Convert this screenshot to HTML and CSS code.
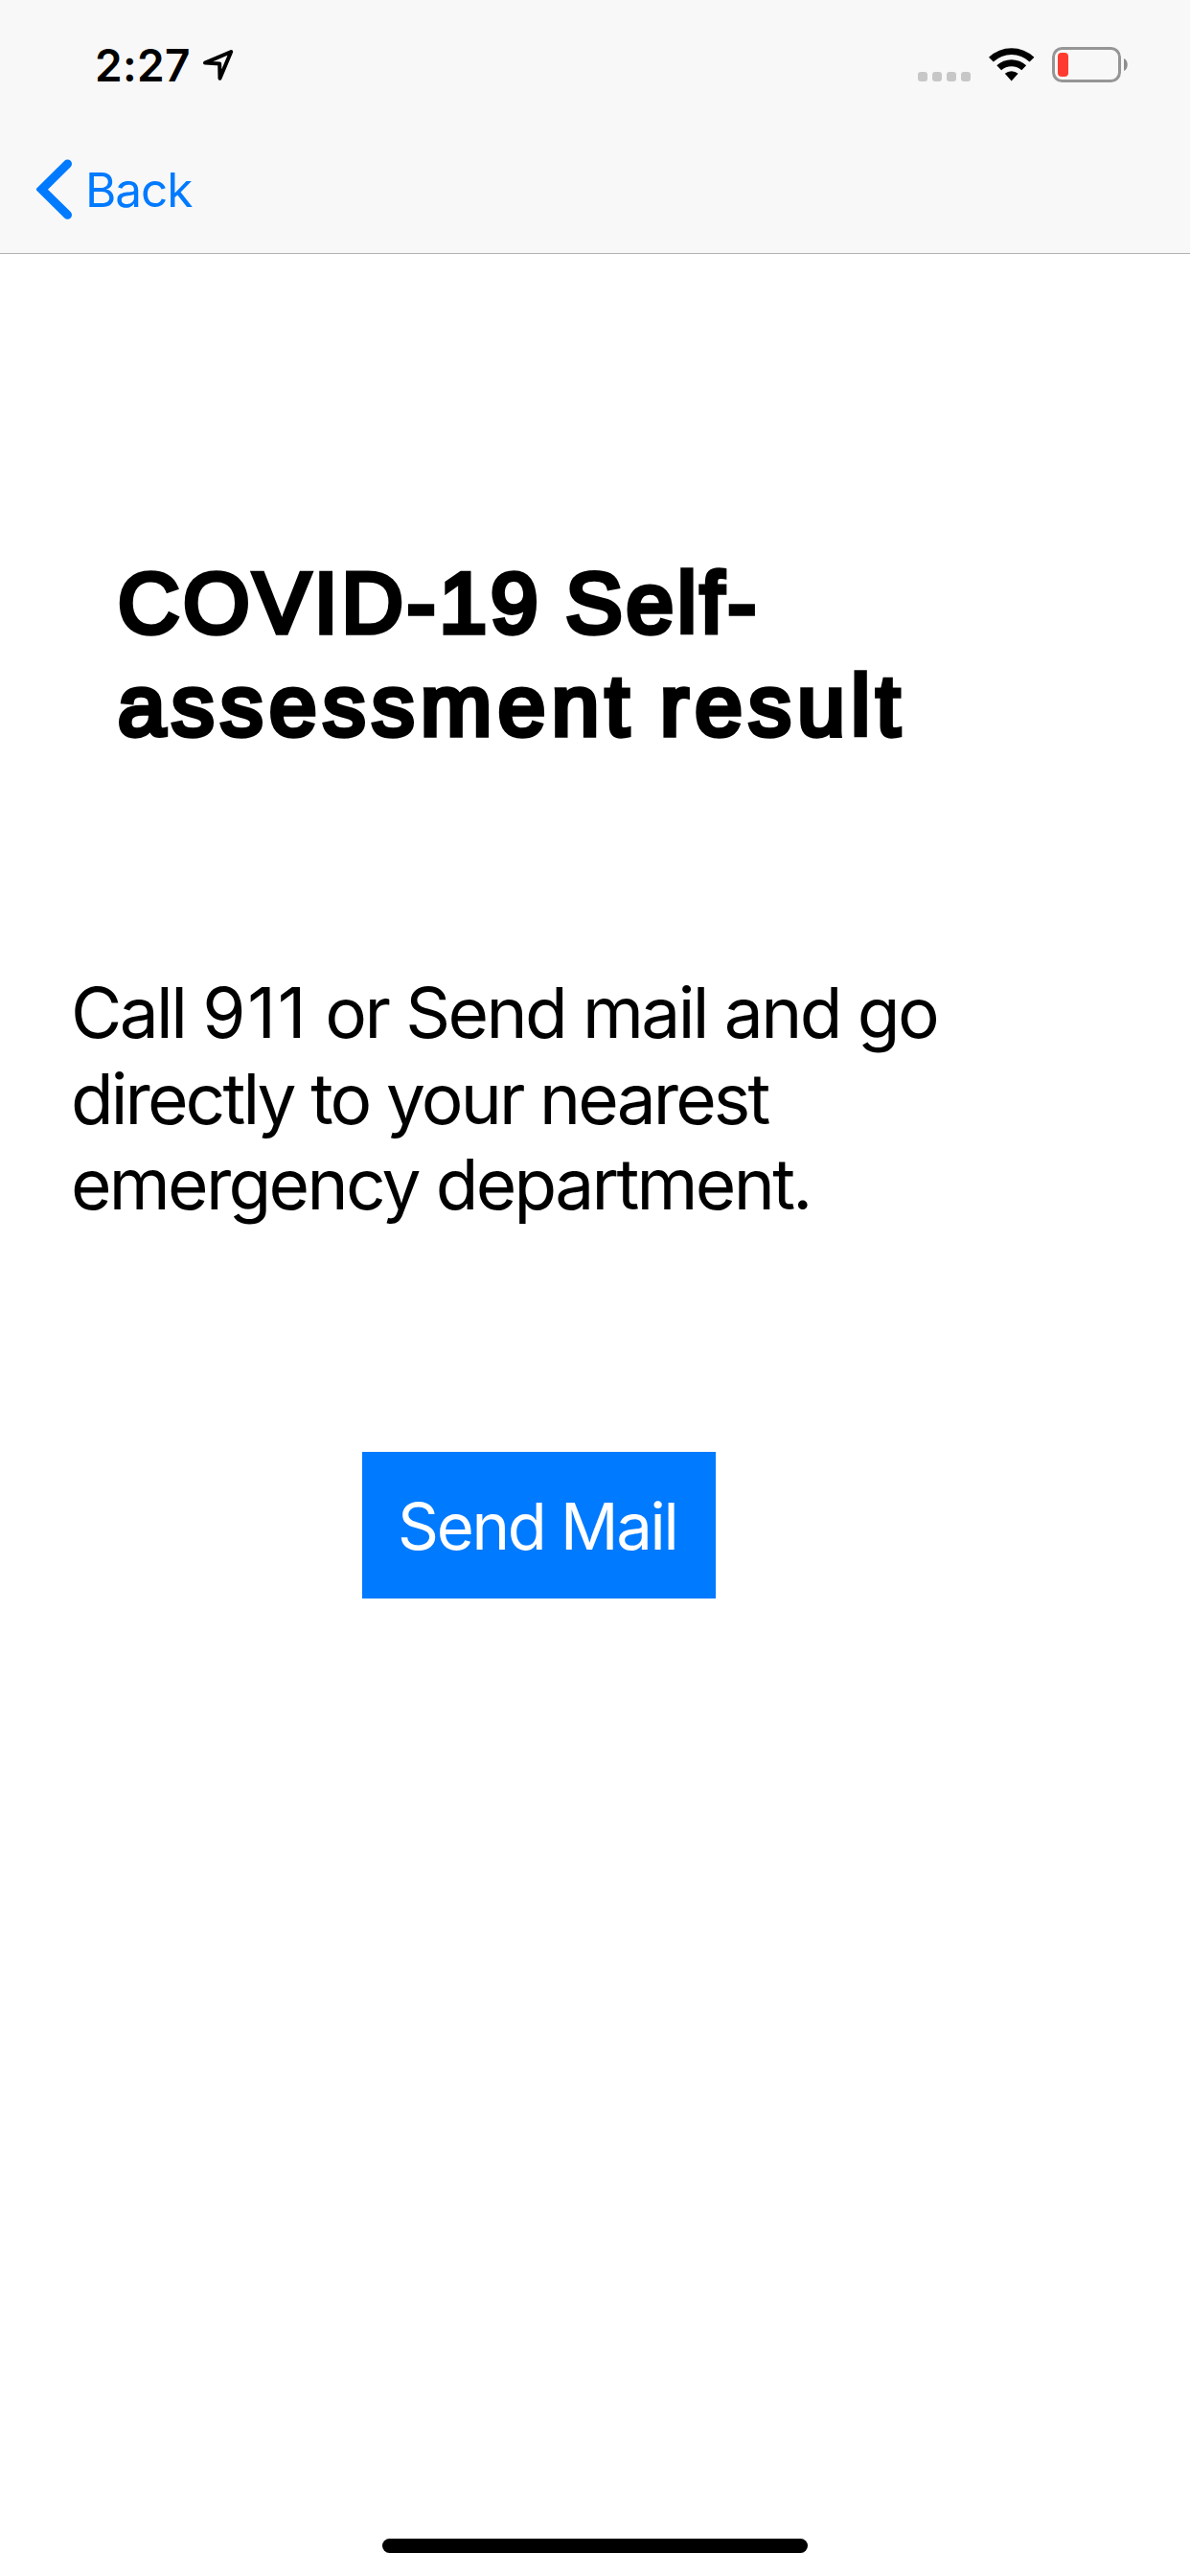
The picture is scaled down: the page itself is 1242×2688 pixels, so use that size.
FILE: index.html
```
<!DOCTYPE html>
<html lang="en">
<head>
<meta charset="utf-8">
<title>COVID-19 Self-assessment result</title>
<link rel="stylesheet" href="styles.css">
</head>
<body>
<div class="screen">
  <header class="header">
    <div class="status-bar">
      <span class="time">2:27</span>
      <svg class="location" viewBox="0 0 36 36" aria-hidden="true">
        <path d="M4 15.6 L31.2 4 L19.5 31.8 L19.2 16.5 Z"/>
      </svg>
      <div class="indicators">
        <div class="signal"><i></i><i></i><i></i><i></i></div>
        <svg class="wifi" viewBox="0 0 48 37" aria-hidden="true">
          <path d="M0 10.7 A34.5 34.5 0 0 1 47.4 10.7 L42.6 15.6 A27.5 27.5 0 0 0 4.8 15.6 Z"/>
          <path d="M8.3 19.3 A22.5 22.5 0 0 1 39.1 19.3 L34.3 24.3 A15.6 15.6 0 0 0 13.1 24.3 Z"/>
          <path d="M16.8 27.8 A10.3 10.3 0 0 1 30.6 27.8 L23.7 35.4 Z"/>
        </svg>
        <svg class="battery" viewBox="0 0 80 37" aria-hidden="true">
          <rect class="battery-case" x="1.5" y="1.5" width="69" height="34" rx="9"/>
          <rect class="battery-level" x="6" y="6" width="11" height="25" rx="4"/>
          <path class="battery-tip" d="M75 12 C80 14 80 23 75 25 Z"/>
        </svg>
      </div>
    </div>
    <nav class="nav-bar">
      <a class="back">
        <svg class="chevron" viewBox="0 0 38 64" aria-hidden="true"><path d="M32.5 5 L5.5 31.7 L32.5 58.3"/></svg>
        <span class="back-label">Back</span>
      </a>
    </nav>
  </header>
  <main class="content">
    <h1 class="title">
      <span class="title-first">COVID-19 Self-</span>
      <span class="title-second">assessment result</span>
    </h1>
    <p class="message">
      <span class="message-first">Call <b class="number">911</b> or Send mail and go</span>
      <span class="message-second">directly to your nearest</span>
      <span class="message-third">emergency department.</span>
    </p>
    <button class="send" type="button">Send Mail</button>
  </main>
  <div class="home-indicator"></div>
</div>
</body>
</html>
```

FILE: styles.css
```
* {
  box-sizing: border-box;
}

body {
  margin: 0;
  background: #fff;
  color: #000;
  font-family: Inter, "Liberation Sans", sans-serif;
}

.screen {
  display: flex;
  flex-direction: column;
  width: 1242px;
  height: 2688px;
}

.header {
  height: 265px;
  background: #f8f8f8;
  border-bottom: 1px solid #b2b2b2;
}

.status-bar {
  display: flex;
  align-items: center;
  height: 132px;
  padding: 4px 64px 0 99px;
}

.time {
  font-size: 46px;
  font-weight: 600;
  line-height: 60px;
  letter-spacing: 0.3px;
}

.location {
  width: 36px;
  height: 36px;
  margin-left: 11px;
  fill: none;
  stroke: #000;
  stroke-width: 4;
  stroke-linejoin: round;
}

.indicators {
  display: flex;
  align-items: flex-end;
  height: 37px;
  margin: 0 0 1px auto;
}

.signal {
  display: flex;
  gap: 5px;
  margin: 0 19px 1px 0;
}

.signal i {
  width: 10px;
  height: 10px;
  border-radius: 3px;
  background: #c7c7c7;
}

.wifi {
  width: 48px;
  height: 37px;
  margin-right: 18px;
}

.battery {
  width: 80px;
  height: 37px;
}

.battery-case {
  fill: none;
  stroke: #969696;
  stroke-width: 3;
}

.battery-level {
  fill: #ff3b30;
}

.battery-tip {
  fill: #8e8e8e;
}

.nav-bar {
  display: flex;
  align-items: center;
  height: 132px;
  padding-left: 38px;
}

.back {
  display: flex;
  align-items: center;
  gap: 13px;
  color: #007aff;
}

.chevron {
  width: 38px;
  height: 64px;
  fill: none;
  stroke: #007aff;
  stroke-width: 9;
  stroke-linecap: round;
}

.back-label {
  font-size: 49.5px;
  line-height: 72px;
  letter-spacing: -1.1px;
}

.content {
  display: flex;
  flex: 1;
  flex-direction: column;
  align-items: flex-start;
}

.title {
  margin: 311px 0 0 123px;
  font-family: "Liberation Sans", Arial, sans-serif;
  font-size: 89px;
  font-weight: 400;
  line-height: 107px;
  -webkit-text-stroke: 5.5px #000;
}

.title span,
.message > span {
  display: block;
  white-space: nowrap;
}

.title-first {
  letter-spacing: 4px;
  word-spacing: -4px;
}

.title-second {
  letter-spacing: 6.5px;
  word-spacing: -5px;
}

.message {
  margin: 222px 0 0 74px;
  font-size: 73px;
  line-height: 89.5px;
}

.message-first {
  letter-spacing: -2.6px;
}

.number {
  font-weight: 400;
  letter-spacing: 1.8px;
}

.message-second {
  letter-spacing: -2.9px;
}

.message-third {
  letter-spacing: -2.7px;
}

.send {
  width: 369px;
  height: 153px;
  margin: 234px 0 0 378px;
  padding: 2px 0 0 37px;
  border: 0;
  background: #007aff;
  color: #fff;
  font-family: inherit;
  font-size: 67px;
  letter-spacing: -2.3px;
  text-align: left;
}

.home-indicator {
  align-self: center;
  width: 444px;
  height: 15px;
  margin-bottom: 24px;
  border-radius: 8px;
  background: #000;
}
```
